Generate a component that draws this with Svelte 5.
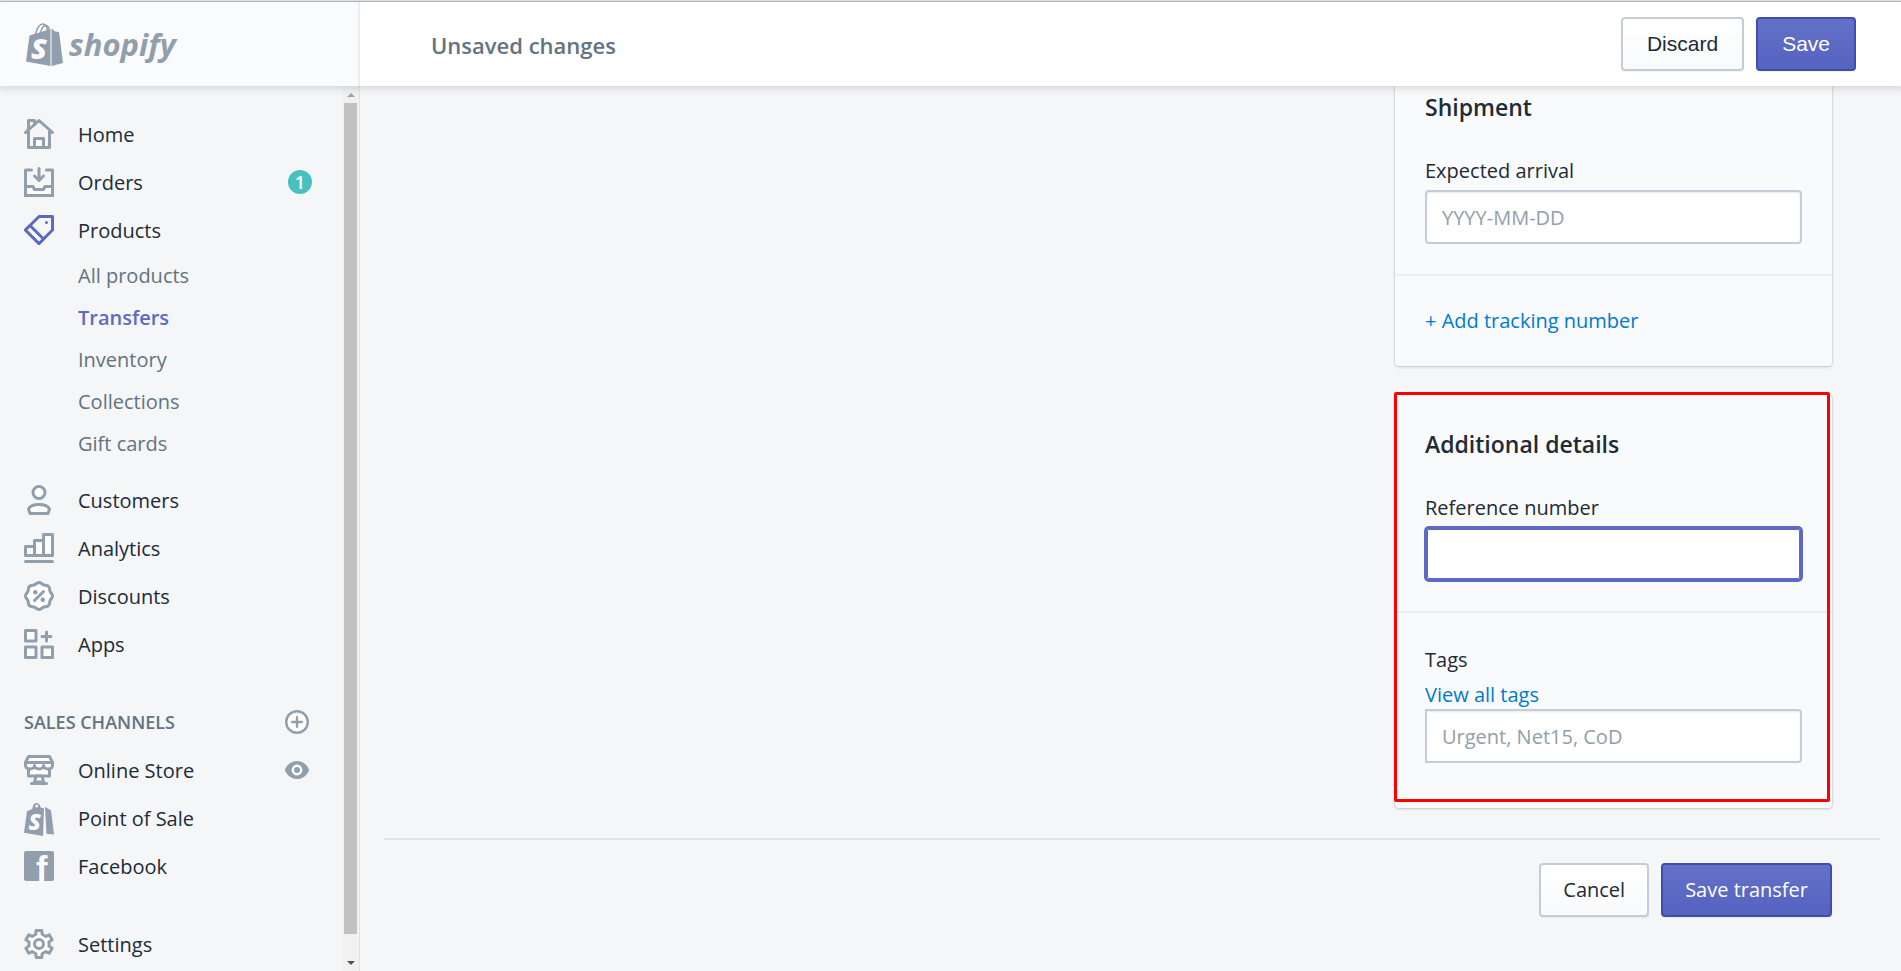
<script>
    const mainItems = [
        { icon: 'home', text: 'Home' },
        { icon: 'orders', text: 'Orders', count: 1 },
        { icon: 'products', text: 'Products', active: true },
    ];
    const productItems = ['All products', 'Transfers', 'Inventory', 'Collections', 'Gift cards'];
    const moreItems = [
        { icon: 'customers', text: 'Customers' },
        { icon: 'analytics', text: 'Analytics' },
        { icon: 'discounts', text: 'Discounts' },
        { icon: 'apps', text: 'Apps' },
    ];
    const channels = [
        { icon: 'store', text: 'Online Store', view: true },
        { icon: 'pos', text: 'Point of Sale' },
        { icon: 'facebook', text: 'Facebook' },
    ];

    let current = 'Transfers';
    let arrival = '';
    let reference = '';
    let tags = '';

    // wavy outline of the discount badge
    let badge = '';
    for (let i = 0; i < 72; i++) {
        const a = (i / 72) * Math.PI * 2;
        const r = 8.5 + 0.5 * Math.cos(8 * a);
        badge += (i ? 'L' : 'M') + (10 + r * Math.cos(a)).toFixed(2) + ' ' + (10 + r * Math.sin(a)).toFixed(2);
    }
    badge += 'z';

    // gear outline, six teeth
    let gear = '';
    for (let i = 0; i < 6; i++) {
        [[-12, 9.2], [12, 9.2], [18, 6.8], [42, 6.8]].forEach(([deg, r], j) => {
            const a = ((i * 60 + deg - 90) * Math.PI) / 180;
            gear += (i + j ? 'L' : 'M') + (10 + r * Math.cos(a)).toFixed(2) + ' ' + (10 + r * Math.sin(a)).toFixed(2);
        });
    }
    gear += 'z';
</script>

{#snippet icon(name, active)}
    <svg class="icon" class:icon-active={active} viewBox="0 0 20 20" aria-hidden="true">
        {#if name === 'home'}
            <path d="M3 8V1h4v3M3 8v11h14V8M1 9l9-8 9 8" />
            <path class="white" d="M7 19v-6h6v6z" />
        {:else if name === 'orders'}
            <path class="white" d="M1 13h5l1 2h6l1-2h5v6H1z" />
            <path d="M5 2H1v17h18V2h-4M10 1v8M7 6l3 3 3-3" />
        {:else if name === 'products'}
            <path d="M10 1h9v9l-9 9-9-9z" />
            <path class="white" d="M4 7l9 9-3 3-9-9z" />
            <circle class="solid" cx="15" cy="5" r="1" />
        {:else if name === 'customers'}
            <circle class="white" cx="10" cy="5" r="4" />
            <path class="white" d="M4 19h12l1-3c-1-2-4-3-7-3s-6 1-7 3z" />
        {:else if name === 'analytics'}
            <path class="white" d="M1 9h6v6H1zM7 5h6v10H7zM13 1h6v14h-6z" />
            <path d="M1 19h18" />
        {:else if name === 'discounts'}
            <path class="white" d={badge} />
            <path d="M7 13l6-6" />
            <circle class="solid" cx="7.5" cy="7.5" r="1.5" />
            <circle class="solid" cx="12.5" cy="12.5" r="1.5" />
        {:else if name === 'apps'}
            <path class="white" d="M1 1h7v7H1zM1 12h7v7H1zM12 12h7v7h-7z" />
            <path d="M15 2v6M12 5h6" />
        {:else if name === 'store'}
            <path class="white" d="M3 7h14v7H3z" />
            <path class="white" d="M8 14l-1 4h6l-1-4zM5 19h10" />
            <path class="white" d="M3 1h14l2 4v2c0 3-6 3-6 0 0 3-6 3-6 0 0 3-6 3-6 0V5z" />
            <path d="M1 5h18" />
        {:else if name === 'pos'}
            <path class="fill" d="M2 5.5l3.500-1.500C6 1 7 0 8.500 0s2.500 1.500 2.500 3l2.300.5L12.700 22 0 19.800z" />
            <path class="fill" d="M14 2.500L18 5l2 16-5-.5z" />
            <circle class="hole" cx="8.500" cy="2" r="1" />
            <text class="mark" x="3" y="18" font-size="15">S</text>
        {:else if name === 'facebook'}
            <rect class="fill" width="20" height="20" rx="1.500" />
            <text class="mark upright" x="8" y="20" font-size="23">f</text>
        {:else if name === 'settings'}
            <path class="white" d={gear} />
            <circle class="white" cx="10" cy="10" r="3" />
        {:else if name === 'plus'}
            <circle class="white" cx="10" cy="10" r="9" />
            <path d="M10 6v8M6 10h8" />
        {:else if name === 'eye'}
            <path class="fill" d="M10 2.500C3 2.500 0 9 0 10s3 7.500 10 7.500S20 11 20 10s-3-7.500-10-7.500z" />
            <circle class="pupil" cx="10" cy="10" r="3.500" />
        {/if}
    </svg>
{/snippet}

{#snippet navRow(item)}
    <li class="row">
        <a class="row-link" href="#{item.icon}">
            {@render icon(item.icon, item.active)}
            <span>{item.text}</span>
        </a>
        {#if item.count}
            <span class="count">{item.count}</span>
        {/if}
        {#if item.view}
            <button class="icon-button" aria-label="View your online store">{@render icon('eye')}</button>
        {/if}
    </li>
{/snippet}

<div class="app">
    <header class="topbar">
        <a class="brand" href="#home">
            <svg class="bag" viewBox="0 0 38 43" aria-hidden="true">
                <path class="fill" d="M3.500 12.500L24.500 6v37L0 38.500z" />
                <path class="fill" d="M25.500 5.500L29 8.500l4 .5 4 31-11.500 3z" />
                <path class="handle" d="M9.500 11C11 5 14 1 17 1c3 0 4 3 4.500 7M14.500 10C15.500 5 18 2.500 20 2.500c2 0 3 2 3.500 5" />
                <text class="mark" x="5" y="35.500" font-size="29">S</text>
            </svg>
            <span>shopify</span>
        </a>
        <div class="savebar">
            <h1>Unsaved changes</h1>
            <div class="actions">
                <button class="button system">Discard</button>
                <button class="button system primary">Save</button>
            </div>
        </div>
    </header>

    <div class="body">
        <aside class="sidebar">
            <nav>
                <ul>
                    {#each mainItems as item}
                        {@render navRow(item)}
                    {/each}
                </ul>
                <ul class="sub">
                    {#each productItems as text}
                        <li>
                            <a href="#products" class:current={current === text} on:click={() => (current = text)}>{text}</a>
                        </li>
                    {/each}
                </ul>
                <ul>
                    {#each moreItems as item}
                        {@render navRow(item)}
                    {/each}
                </ul>
                <div class="channels-head">
                    <h2>SALES CHANNELS</h2>
                    <button class="icon-button" aria-label="Add sales channel">{@render icon('plus')}</button>
                </div>
                <ul>
                    {#each channels as item}
                        {@render navRow(item)}
                    {/each}
                </ul>
                <ul class="bottom">
                    {@render navRow({ icon: 'settings', text: 'Settings' })}
                </ul>
            </nav>
            <div class="scrollbar" aria-hidden="true">
                <span class="arrow up"></span>
                <span class="thumb"></span>
                <span class="arrow down"></span>
            </div>
        </aside>

        <main>
            <div class="cards">
                <section class="card clipped">
                    <div class="section">
                        <h2>Shipment</h2>
                        <label for="arrival">Expected arrival</label>
                        <input id="arrival" type="text" placeholder="YYYY-MM-DD" bind:value={arrival}>
                    </div>
                    <div class="section">
                        <a class="link" href="#tracking">+ Add tracking number</a>
                    </div>
                </section>

                <section class="card">
                    <div class="section">
                        <h2>Additional details</h2>
                        <label for="reference">Reference number</label>
                        <input id="reference" class="focused" type="text" bind:value={reference}>
                    </div>
                    <div class="section tags">
                        <label for="tags">Tags</label>
                        <a class="link" href="#tags">View all tags</a>
                        <input id="tags" type="text" placeholder="Urgent, Net15, CoD" bind:value={tags}>
                    </div>
                    <div class="highlight"></div>
                </section>
            </div>

            <footer>
                <button class="button">Cancel</button>
                <button class="button primary">Save transfer</button>
            </footer>
        </main>
    </div>
</div>

<style>
    :global(body) {
        margin: 0;
        background: #f4f6f8;
    }
    * {
        box-sizing: border-box;
    }
    .app {
        display: flex;
        flex-direction: column;
        height: 100vh;
        overflow: hidden;
        font-family: "Open Sans", "Noto Sans", sans-serif;
        font-size: 20px;
        line-height: 30px;
        color: #212b36;
    }
    h1, h2, ul {
        margin: 0;
        padding: 0;
    }
    ul {
        list-style: none;
    }
    a {
        color: inherit;
        text-decoration: none;
    }
    button, input {
        font: inherit;
        color: inherit;
    }

    /* top bar */
    .topbar {
        display: flex;
        height: 85px;
        flex: none;
        margin-top: 1px;
        border-top: 1px solid #b1b5b8;
        background: #fff;
        box-shadow: 0 0 8px 2px rgba(33, 43, 54, 0.18);
        z-index: 1;
    }
    .brand {
        display: flex;
        align-items: center;
        gap: 5px;
        width: 360px;
        flex: none;
        padding-left: 26px;
        border-right: 2px solid #ebeef0;
        background: #fafbfc;
        color: #919eab;
        font-size: 31px;
        font-style: italic;
        font-weight: 700;
    }
    .bag {
        width: 38px;
        height: 43px;
    }
    .savebar {
        display: flex;
        flex: 1;
        align-items: center;
        justify-content: space-between;
        padding: 0 45px 0 71px;
    }
    h1 {
        padding-top: 2px;
        font-size: 22px;
        font-weight: 600;
        color: #637381;
    }
    .actions {
        display: flex;
        gap: 12px;
    }

    /* buttons */
    .button {
        height: 54px;
        padding: 0 22px;
        border: 2px solid #c4cdd5;
        border-radius: 4px;
        background: linear-gradient(#fff, #f9fafb);
        box-shadow: 0 1px 1px rgba(22, 29, 37, 0.06);
        cursor: pointer;
    }
    .system {
        padding: 0 24px;
        font-family: "Liberation Sans", Arial, sans-serif;
        font-size: 21px;
    }
    .primary {
        border-color: #3f4eae;
        background: linear-gradient(#6371c7, #5563c1);
        color: #fff;
    }
    .icon-button {
        display: flex;
        margin-right: 3px;
        padding: 0;
        border: 0;
        background: none;
        cursor: pointer;
    }

    /* navigation */
    .body {
        display: flex;
        flex: 1;
        min-height: 0;
    }
    .sidebar {
        display: flex;
        width: 360px;
        flex: none;
        border-right: 1px solid #dfe3e8;
    }
    nav {
        display: flex;
        flex: 1;
        flex-direction: column;
        padding: 24px 30px 3px 24px;
        overflow: hidden;
    }
    .row {
        display: flex;
        align-items: center;
        justify-content: space-between;
        height: 48px;
    }
    .row-link {
        display: flex;
        align-items: center;
        gap: 24px;
        font-weight: 500;
    }
    .row-link span {
        padding-top: 2px;
    }
    .sub {
        padding: 1px 0 11px 54px;
        line-height: 42px;
        color: #637381;
    }
    .current {
        font-weight: 600;
        color: #5c6ac4;
    }
    .count {
        width: 24px;
        border-radius: 12px;
        background: #47c1bf;
        color: #fff;
        font-size: 18px;
        font-weight: 600;
        line-height: 24px;
        text-align: center;
    }
    .channels-head {
        display: flex;
        align-items: center;
        justify-content: space-between;
        height: 48px;
        margin-top: 30px;
        color: #637381;
    }
    .channels-head h2 {
        font-size: 18px;
        font-weight: 600;
    }
    .bottom {
        margin-top: auto;
    }

    /* icons */
    .icon {
        width: 30px;
        height: 30px;
        overflow: visible;
        fill: none;
        stroke: #919eab;
        stroke-width: 2;
        stroke-linejoin: round;
        stroke-linecap: round;
    }
    .icon-active {
        stroke: #5c6ac4;
    }
    .icon-button .icon {
        width: 24px;
        height: 24px;
    }
    .white {
        fill: #fff;
    }
    .fill,
    .solid {
        fill: #919eab;
        stroke: none;
    }
    .icon-active .solid {
        fill: #5c6ac4;
    }
    .hole {
        fill: #f4f6f8;
        stroke: none;
    }
    .pupil {
        fill: #919eab;
        stroke: #fff;
    }
    .handle {
        fill: none;
        stroke: #919eab;
        stroke-width: 1.5;
    }
    .mark {
        fill: #fafbfc;
        stroke: none;
        font-family: "Open Sans", sans-serif;
        font-style: italic;
        font-weight: 800;
    }
    .upright {
        font-family: "Liberation Sans", Arial, sans-serif;
        font-style: normal;
    }

    /* scrollbar */
    .scrollbar {
        display: flex;
        flex-direction: column;
        align-items: center;
        width: 17px;
        background: #f1f1f1;
    }
    .thumb {
        flex: 1;
        width: 13px;
        margin: 6px 0 27px;
        background: #c1c1c1;
    }
    .arrow {
        border: 4px solid transparent;
    }
    .up {
        margin-top: 3px;
        border-bottom-color: #a3a3a3;
    }
    .down {
        margin-bottom: 2px;
        border-top-color: #505050;
    }

    /* content */
    main {
        flex: 1;
        overflow: hidden;
    }
    .cards {
        display: flex;
        flex-direction: column;
        align-items: flex-end;
        gap: 29px;
        margin: 0 21px 0 24px;
        padding: 0 48px 30px 0;
        border-bottom: 2px solid #dfe3e8;
    }
    .card {
        position: relative;
        width: 437px;
        border-radius: 4px;
        background: #f9fafb;
        box-shadow: 0 0 0 1px rgba(63, 63, 68, 0.08), 0 1px 3px rgba(63, 63, 68, 0.2);
    }
    .clipped {
        border-radius: 0 0 4px 4px;
    }
    .section {
        display: flex;
        flex-direction: column;
        align-items: flex-start;
        padding: 30px;
    }
    .section + .section {
        border-top: 2px solid #ebeef0;
    }
    .clipped .section:first-child {
        padding-top: 2px;
    }
    .card h2 {
        margin-bottom: 30px;
        font-size: 23px;
        font-weight: 600;
        line-height: 38px;
    }
    label {
        margin-bottom: 4px;
    }
    .link {
        color: #007ace;
    }
    input {
        width: 100%;
        height: 54px;
        padding: 0 15px;
        border: 2px solid #c4cdd5;
        border-radius: 4px;
        background: #fff;
        box-shadow: inset 0 1px 2px rgba(99, 115, 129, 0.15);
        outline: none;
    }
    input::placeholder {
        color: #919eab;
        opacity: 1;
    }
    input.focused {
        border-color: #5c6ac4;
        box-shadow: 0 0 0 1px #5c6ac4, inset 0 0 0 1px #5c6ac4;
    }
    .tags {
        padding: 32px 30px 45px;
    }
    .tags label {
        margin-bottom: 6px;
    }
    .tags .link {
        line-height: 28px;
    }
    .tags input {
        border-radius: 0 4px 4px 0;
    }
    .highlight {
        position: absolute;
        inset: -3px 2px 6px -1px;
        border: 3px solid #f00;
        border-radius: 2px;
        pointer-events: none;
    }
    footer {
        display: flex;
        justify-content: flex-end;
        gap: 12px;
        padding: 23px 69px 54px 0;
    }
</style>
